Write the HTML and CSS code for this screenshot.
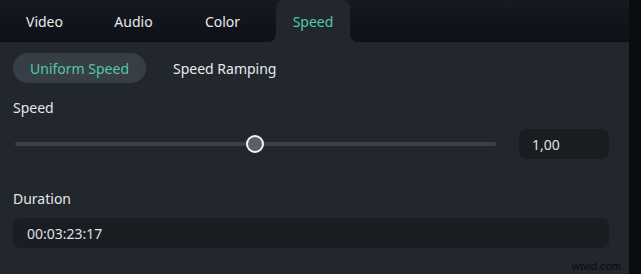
FILE: index.html
```html
<!DOCTYPE html>
<html>
<head>
<meta charset="utf-8">
<link rel="stylesheet" href="styles.css">
</head>
<body>
<div class="app">
  <div class="panel">
    <div class="tabs">
      <div class="tabs-left">
        <div class="tab">Video</div>
        <div class="tab">Audio</div>
        <div class="tab">Color</div>
      </div>
      <div class="tab-active-wrap"><div class="tab-active">Speed</div></div>
      <div class="tabs-right"></div>
    </div>
    <div class="content">
      <div class="modes">
        <div class="mode mode-on">Uniform Speed</div>
        <div class="mode">Speed Ramping</div>
      </div>
      <div class="label label-speed">Speed</div>
      <div class="slider-row">
        <div class="slider">
          <div class="track"></div>
          <div class="thumb"></div>
        </div>
        <div class="field field-small">1,00</div>
      </div>
      <div class="label label-duration">Duration</div>
      <div class="field field-wide">00:03:23:17</div>
      <div class="watermark">wtvid.com</div>
    </div>
  </div>
  <div class="edge"></div>
</div>
</body>
</html>
```
FILE: styles.css
```css
html, body {
  margin: 0;
  padding: 0;
  background: #22272e;
}
body {
  font-family: "Noto Sans", "Open Sans", sans-serif;
  font-size: 14px;
  color: #e4e6e8;
}
.app {
  display: flex;
  width: 641px;
  height: 274px;
  overflow: hidden;
}
.panel {
  flex: 1;
  background: #22272e;
  display: flex;
  flex-direction: column;
}
.edge {
  width: 12px;
  background: #0a0d10;
}
.tabs {
  display: flex;
  height: 42px;
  background: #22272e;
}
.tabs-left {
  width: 276px;
  display: flex;
  background: linear-gradient(#161a21, #0d1116);
  border-bottom-right-radius: 8px;
}
.tab {
  width: 89px;
  display: flex;
  align-items: center;
  justify-content: center;
  color: #e8eaec;
}
.tab-active-wrap {
  width: 74px;
  background: linear-gradient(#161a21, #0d1116);
}
.tab-active {
  height: 100%;
  background: #22272e;
  border-radius: 8px 8px 0 0;
  display: flex;
  align-items: center;
  justify-content: center;
  color: #52c7a6;
}
.tabs-right {
  flex: 1;
  background: linear-gradient(#161a21, #0d1116);
  border-bottom-left-radius: 8px;
}
.content {
  padding: 11px 20px 0 13px;
  display: flex;
  flex-direction: column;
}
.modes {
  display: flex;
  height: 30px;
}
.mode {
  display: flex;
  align-items: center;
  padding: 0 17px;
  border-radius: 15px;
  color: #e8eaec;
}
.mode-on {
  width: 133px;
  box-sizing: border-box;
  justify-content: center;
  padding: 0;
  background: #383e46;
  color: #52c7a6;
  margin-right: 10px;
}
.label {
  height: 20px;
  line-height: 20px;
}
.label-speed {
  margin-top: 15px;
}
.slider-row {
  display: flex;
  align-items: center;
  margin-top: 11px;
}
.slider {
  position: relative;
  width: 484px;
  height: 30px;
  margin-left: 2px;
  display: flex;
  align-items: center;
}
.track {
  width: 481px;
  height: 4px;
  border-radius: 2px;
  background: #3a4149;
}
.thumb {
  position: absolute;
  left: 231px;
  top: 6px;
  width: 14px;
  height: 14px;
  border-radius: 50%;
  border: 2px solid #f2f3f4;
  background: #5a6068;
}
.field {
  height: 30px;
  box-sizing: border-box;
  display: flex;
  align-items: center;
  background: #1a1e22;
  border-radius: 7px;
  color: #dfe1e3;
}
.field-small {
  width: 90px;
  margin-left: 20px;
  padding-left: 13px;
}
.field-wide {
  width: 596px;
  padding-left: 14px;
  margin-top: 9px;
}
.label-duration {
  margin-top: 30px;
}
.watermark {
  align-self: flex-end;
  margin-top: 12px;
  margin-right: -12px;
  font-family: "Liberation Sans", Arial, sans-serif;
  font-size: 11px;
  color: #0a0a0a;
  line-height: 12px;
}
```
